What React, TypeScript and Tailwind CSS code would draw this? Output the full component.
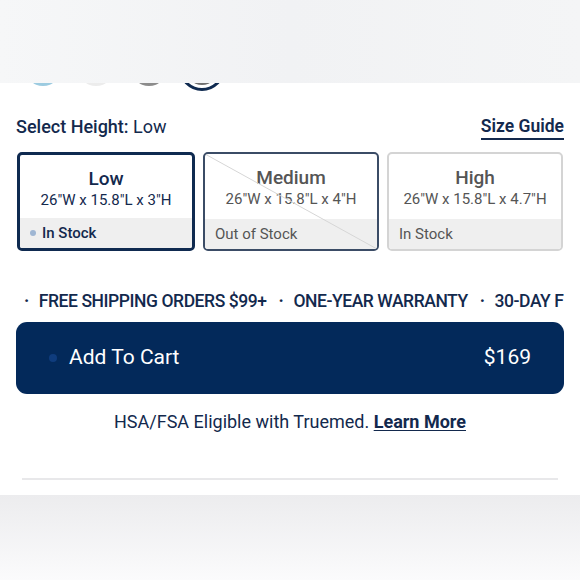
const heights = [
  { name: "Low", dims: '26"W x 15.8"L x 3"H', stock: "In Stock", state: "selected" },
  { name: "Medium", dims: '26"W x 15.8"L x 4"H', stock: "Out of Stock", state: "out" },
  { name: "High", dims: '26"W x 15.8"L x 4.7"H', stock: "In Stock", state: "idle" },
];

const perks = ["FREE SHIPPING ORDERS $99+", "ONE-YEAR WARRANTY", "30-DAY FREE RETURNS"];

function HeightCard({ item }: { item: (typeof heights)[number] }) {
  const border =
    item.state === "selected"
      ? "border-[3px] border-[#0f2a50]"
      : item.state === "out"
        ? "border-2 border-[#3b4c66]"
        : "border-2 border-[#d4d4d4]";
  const titleColor = item.state === "selected" ? "text-[#13294d]" : "text-[#555]";
  return (
    <div className={`relative flex-1 h-[99px] rounded-[5px] overflow-hidden flex flex-col bg-white ${border}`}>
      <div className="flex-1 flex flex-col items-center pt-[13px]">
        <p className={`text-[19px] leading-[22px] font-medium ${titleColor}`}>{item.name}</p>
        <p className={`text-[15px] leading-[20px] ${titleColor}`}>{item.dims}</p>
      </div>
      <div className="h-[30px] bg-[#efefef] flex items-center gap-[6px] px-[10px]">
        {item.state === "selected" && <span className="w-[6px] h-[6px] rounded-full bg-[#9fb6d3]" />}
        <span className={`text-[15px] ${item.state === "selected" ? "text-[#13294d] font-medium" : "text-[#555]"}`}>
          {item.stock}
        </span>
      </div>
      {item.state === "out" && (
        <svg className="absolute inset-0 w-full h-full pointer-events-none" preserveAspectRatio="none" viewBox="0 0 100 100">
          <line x1="0" y1="0" x2="100" y2="100" stroke="#d6d6d6" strokeWidth="1" vectorEffect="non-scaling-stroke" />
        </svg>
      )}
    </div>
  );
}

export default function App() {
  return (
    <div className="w-[580px] h-[580px] bg-white overflow-hidden flex flex-col" style={{ fontFamily: "Roboto, 'Liberation Sans', sans-serif" }}>
      {/* colour swatches, mostly hidden under the grey band */}
      <div className="relative">
        <div className="h-[83px] bg-gradient-to-r from-[#f6f7f8] via-[#f1f2f4] to-[#f4f5f6]" />
        <div className="h-[9px] overflow-hidden flex items-end">
          <div className="flex items-end pl-[25px] gap-[17px]">
            <span className="w-[36px] h-[36px] rounded-full bg-[#9ccbe0] mb-[6px]" />
            <span className="w-[36px] h-[36px] rounded-full bg-[#ececec] mb-[6px]" />
            <span className="w-[36px] h-[36px] rounded-full bg-[#8c8c8c] mb-[6px]" />
            <span className="w-[46px] h-[46px] rounded-full border-[3px] border-[#0f2a50] flex items-center justify-center -ml-[5px] mb-[1px]">
              <span className="w-[34px] h-[34px] rounded-full bg-[#6f6f6f]" />
            </span>
          </div>
        </div>
      </div>

      <div className="px-4">
        <div className="flex items-end justify-between mt-[21px]">
          <p className="text-[18px] text-[#13294d]">
            <span className="font-medium">Select Height:</span> Low
          </p>
          <a className="text-[17.5px] font-semibold text-[#13294d] border-b-2 border-[#13294d] leading-[22px] pb-[1px]">
            Size Guide
          </a>
        </div>

        <div className="flex gap-2 mt-[12px] px-[1px]">
          {heights.map((h) => (
            <HeightCard key={h.name} item={h} />
          ))}
        </div>

        {/* perks ticker, runs past the right edge */}
        <div className="mt-[40px] overflow-hidden whitespace-nowrap flex gap-[12px] pl-[8px] text-[17.5px] font-medium tracking-[-0.025em] text-[#13294d] leading-[20px]">
          {perks.map((p) => (
            <span key={p} className="shrink-0 flex items-center gap-[10px]">
              <span className="font-bold">·</span>
              {p}
            </span>
          ))}
        </div>

        <button className="mt-[11px] w-full h-[72px] rounded-[11px] bg-[#03295a] flex items-center justify-between px-[33px] text-white">
          <span className="flex items-center gap-[12px]">
            <span className="w-[8px] h-[8px] rounded-full bg-[#0f3c7d]" />
            <span className="text-[21px]">Add To Cart</span>
          </span>
          <span className="text-[21px]">$169</span>
        </button>

        <p className="mt-[14px] text-center text-[18px] text-[#13294d]">
          HSA/FSA Eligible with Truemed. <a className="font-bold underline underline-offset-2">Learn More</a>
        </p>

        <div className="mt-[43px] mx-[6px] h-[2px] bg-[#e8e8ea]" />
      </div>

      <div className="mt-[15px] flex-1 bg-gradient-to-b from-[#ececee] to-[#fbfbfc]" />
    </div>
  );
}
